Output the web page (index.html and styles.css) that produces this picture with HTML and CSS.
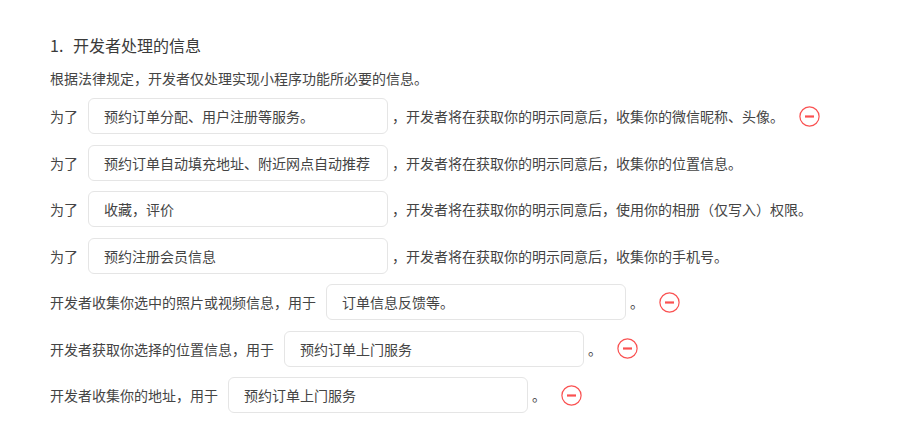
FILE: index.html
```html
<!DOCTYPE html>
<html lang="zh-CN">
<head>
  <meta charset="UTF-8">
  <title>用户隐私保护指引</title>
  <link rel="stylesheet" href="styles.css">
</head>
<body>
  <div class="section">
    <h3 class="title"><span class="num">1.</span>开发者处理的信息</h3>
    <p class="desc">根据法律规定，开发者仅处理实现小程序功能所必要的信息。</p>

    <div class="row">
      <span class="label">为了</span>
      <input class="field" type="text" value="预约订单分配、用户注册等服务。">
      <span class="after">，开发者将在获取你的明示同意后，收集你的微信昵称、头像。</span>
      <span class="remove"><svg width="21" height="21" viewBox="0 0 21 21"><circle cx="10.5" cy="10.5" r="9.6" fill="none" stroke="#fa5151" stroke-width="1.2"/><rect x="6" y="9.4" width="9" height="2.2" fill="#fa5151"/></svg></span>
    </div>

    <div class="row">
      <span class="label">为了</span>
      <input class="field" type="text" value="预约订单自动填充地址、附近网点自动推荐">
      <span class="after">，开发者将在获取你的明示同意后，收集你的位置信息。</span>
    </div>

    <div class="row">
      <span class="label">为了</span>
      <input class="field" type="text" value="收藏，评价">
      <span class="after">，开发者将在获取你的明示同意后，使用你的相册（仅写入）权限。</span>
    </div>

    <div class="row">
      <span class="label">为了</span>
      <input class="field" type="text" value="预约注册会员信息">
      <span class="after">，开发者将在获取你的明示同意后，收集你的手机号。</span>
    </div>

    <div class="row">
      <span class="label">开发者收集你选中的照片或视频信息，用于</span>
      <input class="field" type="text" value="订单信息反馈等。">
      <span class="after">。</span>
      <span class="remove"><svg width="21" height="21" viewBox="0 0 21 21"><circle cx="10.5" cy="10.5" r="9.6" fill="none" stroke="#fa5151" stroke-width="1.2"/><rect x="6" y="9.4" width="9" height="2.2" fill="#fa5151"/></svg></span>
    </div>

    <div class="row">
      <span class="label">开发者获取你选择的位置信息，用于</span>
      <input class="field" type="text" value="预约订单上门服务">
      <span class="after">。</span>
      <span class="remove"><svg width="21" height="21" viewBox="0 0 21 21"><circle cx="10.5" cy="10.5" r="9.6" fill="none" stroke="#fa5151" stroke-width="1.2"/><rect x="6" y="9.4" width="9" height="2.2" fill="#fa5151"/></svg></span>
    </div>

    <div class="row">
      <span class="label">开发者收集你的地址，用于</span>
      <input class="field" type="text" value="预约订单上门服务">
      <span class="after">。</span>
      <span class="remove"><svg width="21" height="21" viewBox="0 0 21 21"><circle cx="10.5" cy="10.5" r="9.6" fill="none" stroke="#fa5151" stroke-width="1.2"/><rect x="6" y="9.4" width="9" height="2.2" fill="#fa5151"/></svg></span>
    </div>
  </div>
</body>
</html>
```

FILE: styles.css
```css
body { margin: 0; background: #fff; font-family: "Noto Sans CJK SC", "Noto Sans", sans-serif; color: #444; }
.section { padding: 34px 0 0 50px; }
.title { margin: 0; font-size: 16px; font-weight: normal; line-height: 22px; color: #3a3a3a; }
.num { display: inline-block; width: 23px; }
.desc { margin: 12px 0 10px; font-size: 14px; line-height: 20px; }
.row { display: flex; align-items: center; height: 36px; margin-bottom: 10.5px; font-size: 14px; }
.label { margin-right: 10px; white-space: nowrap; }
.field { width: 300px; height: 36px; box-sizing: border-box; padding: 0 15px; border: 1px solid #e5e5e5; border-radius: 6px; font: inherit; font-size: 14px; color: #444; outline: none; background: #fff; }
.after { margin-left: 4px; white-space: nowrap; }
.remove { display: flex; margin-left: 15px; cursor: pointer; }
```
